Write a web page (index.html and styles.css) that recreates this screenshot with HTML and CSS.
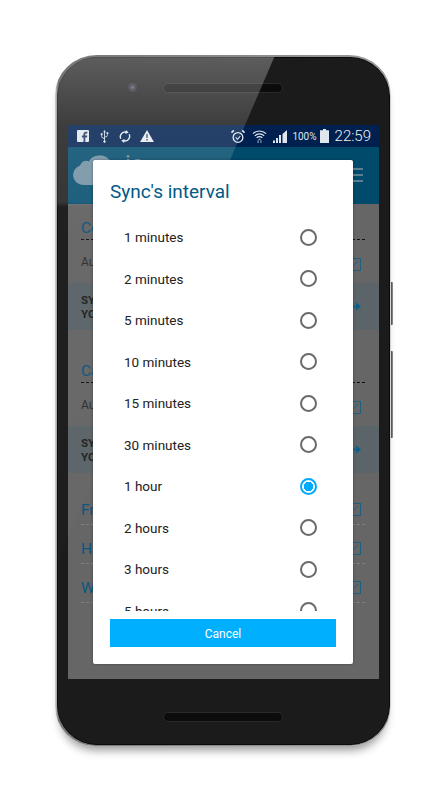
FILE: index.html
```html
<!DOCTYPE html>
<html lang="en">
<head>
<meta charset="utf-8">
<title>Sync's interval</title>
<link rel="stylesheet" href="styles.css">
</head>
<body>
<div class="stage">
  <div class="phone">
    <span class="side-btn side-power"></span>
    <span class="side-btn side-volume"></span>
    <div class="bezel">
      <div class="earpiece-row">
        <span class="camera"></span>
        <span class="speaker"></span>
      </div>
      <div class="screen">
        <div class="statusbar">
          <div class="status-left">
            <svg class="ic" width="12" height="12" viewBox="0 0 13 13"><rect width="13" height="13" rx="1" fill="#dfe6ee"/><path d="M9 13V8h1.800l.3-2H9V4.800c0-.6.2-1 1-1h1.200V2H9.600C8 2 7 3 7 4.500V6H5.300v2H7v5z" fill="#1e3a60"/></svg>
            <svg class="ic" width="9" height="13" viewBox="0 0 10 15"><path d="M5 0 3.500 2.500h1V9C3 9 2 8 2 6.800V6h.8V3.800H.7V6h.6v.8C1.300 8.700 3 10 4.500 10v2.200a1.300 1.300 0 1 0 1 0V8.500c1.800 0 3.200-1.200 3.200-3V4.500h.7V2.500H7.300v2h.7v1c0 1.200-1 2.200-2.500 2.200V2.500h1z" fill="#dfe6ee"/></svg>
            <svg class="ic" width="12" height="13" viewBox="0 0 13 14"><path d="M2 9.500A5 5 0 0 1 8.500 2.700M11 4.500A5 5 0 0 1 4.500 11.300" fill="none" stroke="#dfe6ee" stroke-width="1.500"/><path d="M7.500 0l3 2.700-3.600 1.500zM5.500 14l-3-2.700 3.600-1.500z" fill="#dfe6ee"/></svg>
            <svg class="ic warn" width="14" height="12" viewBox="0 0 15 13"><path d="M7.500 0 15 13H0z" fill="#e6ebf0"/><path d="M6.800 4.200h1.400v4.600H6.800zM6.800 9.800h1.400v1.500H6.800z" fill="#1e3a60"/></svg>
          </div>
          <div class="status-right">
            <svg class="ic" width="14" height="15" viewBox="0 0 15 15"><circle cx="7.500" cy="8.500" r="5.200" fill="none" stroke="#dfe6ee" stroke-width="1.400"/><path d="M5 8.500l2 2 3-3.500" fill="none" stroke="#dfe6ee" stroke-width="1.200"/><path d="M.5 3.500 3 1M14.500 3.500 12 1" stroke="#dfe6ee" stroke-width="1.800"/></svg>
            <svg class="ic gap-wifi" width="15" height="15" viewBox="0 0 16 15"><path d="M1 4.500a10 10 0 0 1 14 0M3 6.800a7 7 0 0 1 10 0M5 9a4 4 0 0 1 6 0" fill="none" stroke="#dfe6ee" stroke-width="1.300"/><path d="M8 9.500l1.500 1.500h-3z" fill="#dfe6ee"/><path d="M6.500 11.500v3M9.500 11.500v3" stroke="#8ea2b8" stroke-width="1.200"/></svg>
            <svg class="ic gap-signal" width="14" height="13" viewBox="0 0 14 13"><path d="M0 13h2v-2.500H0zM3 13h2V8H3zM6 13h2V5H6z" fill="#dfe6ee"/><path d="M9.500 13H14V0L9.500 4z" fill="#dfe6ee"/></svg>
            <span class="battery-pct">100%</span>
            <svg class="ic gap-battery" width="9" height="14" viewBox="0 0 9 14"><path d="M3 0h3v1.300h3V14H0V1.300h3z" fill="#dfe6ee"/></svg>
            <span class="clock">22:59</span>
          </div>
        </div>
        <div class="appbar">
          <div class="logo">
            <svg class="cloud" width="60" height="32" viewBox="0 0 60 32"><path d="M10 30A10 10 0 0 1 7 10.500C9 6 13 5 16 6.500 18 2 23 0 28 .5c5 .5 9 3.500 10 7.500 6-1 11 2 12.500 7 4.500.5 7.500 4 7.500 8 0 4-3 7-8 7z" fill="#6f8fa1"/></svg>
            <span class="logo-text">io</span>
          </div>
          <span class="menu"><i></i><i></i><i></i></span>
        </div>
        <div class="content">
          <section class="block">
            <h2 class="block-title">Co</h2>
            <div class="toggle-row"><span>Au</span><span class="check"><svg width="11" height="11" viewBox="0 0 11 11"><path d="M2 9 9 2" stroke="#1f5f80" stroke-width="1"/></svg></span></div>
          </section>
          <div class="band"><span>SY<br>YO</span><svg class="arrow" width="10" height="9" viewBox="0 0 10 9"><path d="M0 4.500h6" stroke="#0d5f8a" stroke-width="1.500"/><path d="M5 .5 10 4.500 5 8.500z" fill="#0d5f8a"/></svg></div>
          <section class="block block-second">
            <h2 class="block-title">Ca</h2>
            <div class="toggle-row"><span>Au</span><span class="check"><svg width="11" height="11" viewBox="0 0 11 11"><path d="M2 9 9 2" stroke="#1f5f80" stroke-width="1"/></svg></span></div>
          </section>
          <div class="band"><span>SY<br>YO</span><svg class="arrow" width="10" height="9" viewBox="0 0 10 9"><path d="M0 4.500h6" stroke="#0d5f8a" stroke-width="1.500"/><path d="M5 .5 10 4.500 5 8.500z" fill="#0d5f8a"/></svg></div>
          <div class="plain-list">
            <div class="plain-row"><span>Fr</span><span class="check"><svg width="11" height="11" viewBox="0 0 11 11"><path d="M2 9 9 2" stroke="#1f5f80" stroke-width="1"/></svg></span></div>
            <div class="plain-row"><span>H</span><span class="check"><svg width="11" height="11" viewBox="0 0 11 11"><path d="M2 9 9 2" stroke="#1f5f80" stroke-width="1"/></svg></span></div>
            <div class="plain-row"><span>W</span><span class="check"><svg width="11" height="11" viewBox="0 0 11 11"><path d="M2 9 9 2" stroke="#1f5f80" stroke-width="1"/></svg></span></div>
          </div>
        </div>
        <div class="dialog">
          <h1 class="dialog-title">Sync's interval</h1>
          <ul class="options">
            <li class="option"><span>1 minutes</span><span class="radio"></span></li>
            <li class="option"><span>2 minutes</span><span class="radio"></span></li>
            <li class="option"><span>5 minutes</span><span class="radio"></span></li>
            <li class="option"><span>10 minutes</span><span class="radio"></span></li>
            <li class="option"><span>15 minutes</span><span class="radio"></span></li>
            <li class="option"><span>30 minutes</span><span class="radio"></span></li>
            <li class="option"><span>1 hour</span><span class="radio radio-on"></span></li>
            <li class="option"><span>2 hours</span><span class="radio"></span></li>
            <li class="option"><span>3 hours</span><span class="radio"></span></li>
            <li class="option"><span>5 hours</span><span class="radio"></span></li>
          </ul>
          <button class="cancel" type="button">Cancel</button>
        </div>
      </div>
      <div class="chin"><span class="speaker"></span></div>
    </div>
    <div class="glare"></div>
  </div>
</div>
</body>
</html>
```

FILE: styles.css
```css
* { box-sizing: border-box; }
html, body { margin: 0; padding: 0; }
body {
  width: 448px;
  height: 800px;
  background: #fff;
  overflow: hidden;
  font-family: Roboto, "Liberation Sans", sans-serif;
}
.stage {
  padding: 55px 0 0 55px;
}
.phone {
  position: relative;
  width: 336px;
  height: 691px;
  border-radius: 42px 42px 40px 40px / 40px;
  background: linear-gradient(90deg, #d4d4d4, #777 1%, #999 99%, #ddd);
  padding: 1.500px;
  box-shadow: 0 9px 10px -5px rgba(0, 0, 0, .42);
}
.bezel {
  height: 100%;
  border-radius: 40px;
  background: #1b1b1b;
  border: 1px solid #0a0a0a;
  padding: 0 10.500px;
  position: relative;
  overflow: hidden;
}
.side-btn {
  position: absolute;
  right: -2px;
  width: 2px;
  background: linear-gradient(90deg, #444, #999);
  border-radius: 0 1px 1px 0;
}
.side-power { top: 227px; height: 43px; }
.side-volume { top: 296px; height: 87px; }
.earpiece-row {
  height: 67.500px;
  position: relative;
  display: flex;
  justify-content: center;
  padding: 25.500px 0 0;
}
.camera {
  position: absolute;
  left: 60px;
  top: 25px;
  width: 9px;
  height: 9px;
  border-radius: 50%;
  background: radial-gradient(circle, #5a5a6a 0 12%, #34323c 35%, #2c2a32 70%, transparent 100%);
}
.speaker {
  display: block;
  width: 120px;
  height: 10px;
  border-radius: 5px;
  background: #0c0c0c;
  border: 1px solid #2a2a2a;
}
.screen {
  position: relative;
  height: 554px;
  width: 311px;
  background: #666;
  overflow: hidden;
}
.statusbar {
  height: 22px;
  background: #00204f;
  display: flex;
  justify-content: space-between;
  align-items: center;
  padding: 0 8px 0 9px;
}
.status-left, .status-right {
  display: flex;
  align-items: center;
}
.status-left { gap: 10.500px; }
.status-left .warn { margin-left: -2px; }
.ic { display: block; flex: none; }
.gap-wifi { margin-left: 7px; }
.gap-signal { margin-left: 6px; }
.battery-pct {
  font-size: 10px;
  color: #dfe6ee;
  margin-left: 5px;
}
.gap-battery { margin-left: 3px; }
.clock {
  font-size: 15px;
  font-weight: 300;
  color: #eef2f6;
  margin-left: 6px;
}
.appbar {
  height: 57px;
  background: #004a6c;
  display: flex;
  justify-content: space-between;
  align-items: flex-start;
  padding: 8px 16px 0 5px;
}
.logo {
  display: flex;
  align-items: flex-start;
}
.cloud { display: block; flex: none; }
.logo-text {
  margin: -5px 0 0 -8px;
  font-size: 24px;
  line-height: 28px;
  color: #6f8fa1;
  flex: none;
}
.menu {
  display: flex;
  flex-direction: column;
  gap: 4px;
  width: 10px;
  margin-top: 13px;
}
.menu i {
  display: block;
  height: 2px;
  background: #5d7e90;
}
.content {
  padding-top: 15px;
  color: #2e2e2e;
  font-size: 12px;
}
.block {
  padding: 0 14px 0 13px;
}
.block-title {
  margin: 0;
  font-size: 15.500px;
  font-weight: 400;
  line-height: 18px;
  color: #0b5680;
  border-bottom: 1px dashed #111;
  height: 21px;
}
.toggle-row {
  display: flex;
  justify-content: space-between;
  align-items: center;
  height: 43px;
  padding-right: 4px;
}
.check {
  display: block;
  width: 13px;
  height: 13px;
  border: 1px solid #1f5f80;
  margin-top: 5px;
  flex: none;
}
.check svg { display: block; }
.band {
  height: 47px;
  background: #5b6468;
  display: flex;
  justify-content: space-between;
  align-items: center;
  padding: 0 18px 0 13px;
  font-size: 11.500px;
  font-weight: 700;
  line-height: 14px;
  color: #222;
}
.arrow { display: block; flex: none; }
.block-second { padding-top: 32px; }
.plain-list {
  padding: 13px 14px 0 13px;
}
.plain-row {
  display: flex;
  justify-content: space-between;
  align-items: center;
  height: 39px;
  font-size: 15.500px;
  color: #0b5680;
  border-bottom: 1px dashed #808080;
  padding: 9px 4px 0 0;
}
.plain-row .check { margin-top: 0; }
.dialog {
  position: absolute;
  left: 25px;
  top: 35px;
  width: 260px;
  height: 504px;
  background: #fff;
  border-radius: 2px;
  box-shadow: 0 0 3px rgba(0, 0, 0, .35);
  padding: 0 17px;
  display: flex;
  flex-direction: column;
  z-index: 3;
}
.dialog-title {
  margin: 0;
  font-size: 19px;
  font-weight: 400;
  line-height: 24px;
  padding-top: 20px;
  height: 56.500px;
  color: #005a85;
  flex: none;
}
.options {
  list-style: none;
  margin: 0;
  padding: 0;
  height: 394.500px;
  overflow: hidden;
  flex: none;
}
.option {
  display: flex;
  justify-content: space-between;
  align-items: center;
  height: 41.500px;
  padding: 0 19px 0 14px;
  font-size: 13.500px;
  color: #222;
  flex: none;
}
.radio {
  display: block;
  width: 17px;
  height: 17px;
  border-radius: 50%;
  border: 2px solid #6a6a6a;
  flex: none;
}
.radio-on {
  border-color: #00aaff;
  background: radial-gradient(circle, #00aaff 0 4.500px, #fff 5px);
}
.cancel {
  display: block;
  width: 226px;
  height: 28px;
  margin-top: 8px;
  border: 0;
  padding: 1px 0 0;
  background: #00b0ff;
  color: #fff;
  font: 400 12px Roboto, "Liberation Sans", sans-serif;
  flex: none;
}
.chin {
  display: flex;
  justify-content: center;
  padding-top: 33px;
}
.glare {
  position: absolute;
  inset: 1.500px;
  border-radius: 40px;
  pointer-events: none;
  background: linear-gradient(180deg, rgba(255, 255, 255, .29) 0, rgba(255, 255, 255, .15) 70px, rgba(255, 255, 255, .12) 145px, rgba(255, 255, 255, .025) 150px, rgba(255, 255, 255, .01) 500px);
  clip-path: polygon(0 0, 218px 0, 0 507px);
  z-index: 1;
}
```
